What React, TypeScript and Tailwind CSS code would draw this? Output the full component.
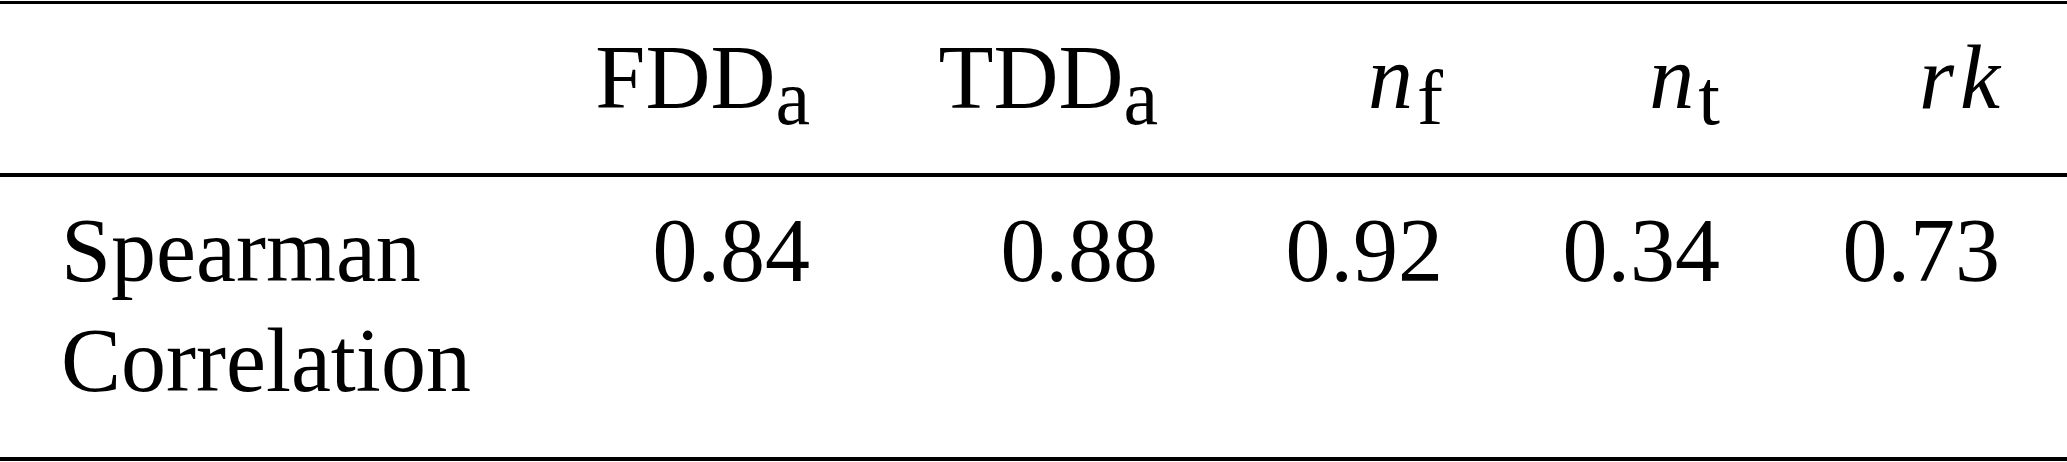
import React from 'react';

// column track widths, measured off the reference (sum = 2067)
const cols = 'grid grid-cols-[532px_342px_348px_285px_277px_283px]';

const Sub = ({ children }: { children: React.ReactNode }) => (
  <span className="text-[78px] leading-none not-italic align-[-16px]">{children}</span>
);

const values = ['0.84', '0.88', '0.92', '0.34', '0.73'];

export default function App() {
  return (
    <div className="w-[2067px] h-[462px] bg-white text-black font-[family-name:'Liberation_Serif','Times_New_Roman',serif] text-[90px] leading-[110px]">
      <div className="pt-[1px]">
        <div className="border-t-[3px] border-black" />

        {/* header */}
        <div className={`${cols} h-[169px] pt-[19px]`}>
          <div className="pl-[61px]"></div>
          <div className="text-right pr-[64px] whitespace-nowrap">
            FDD<Sub>a</Sub>
          </div>
          <div className="text-right pr-[64px] whitespace-nowrap">
            TDD<Sub>a</Sub>
          </div>
          <div className="text-right pr-[64px] whitespace-nowrap">
            <span className="italic mr-[4px]">n</span>
            <Sub>f</Sub>
          </div>
          <div className="text-right pr-[64px] whitespace-nowrap">
            <span className="italic mr-[4px]">n</span>
            <Sub>t</Sub>
          </div>
          <div className="text-right pr-[67px] whitespace-nowrap">
            <span className="italic">r</span>
            <span className="italic ml-[6px]">k</span>
          </div>
        </div>

        <div className="border-t-[4px] border-black" />

        {/* body */}
        <div className={`${cols} h-[280px] pt-[19px]`}>
          <div className="pl-[61px] pr-[40px]">Spearman Correlation</div>
          {values.map((v, i) => (
            <div key={v} className={i === 4 ? 'text-right pr-[67px]' : 'text-right pr-[64px]'}>
              {v}
            </div>
          ))}
        </div>

        <div className="border-t-[4px] border-black" />
      </div>
    </div>
  );
}
